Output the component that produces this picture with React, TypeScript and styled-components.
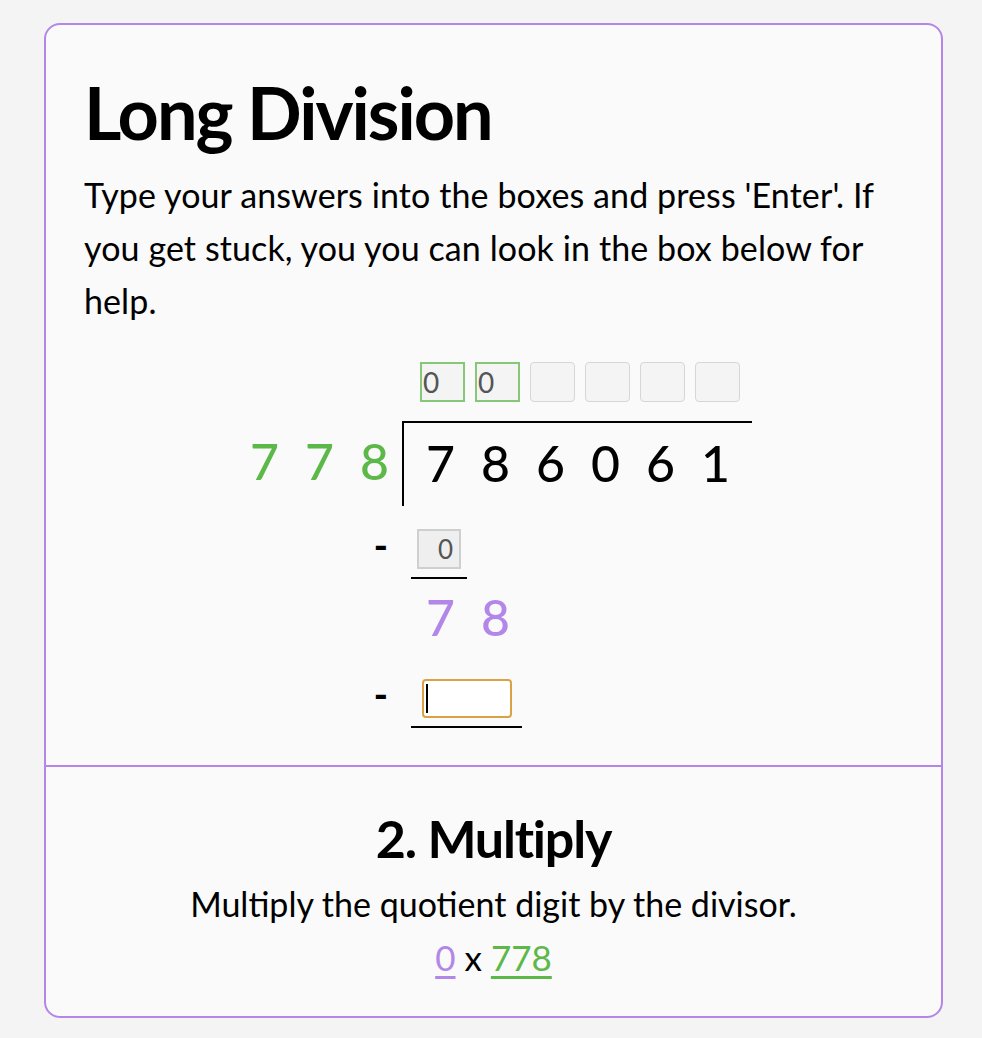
import React from "react";
import styled, { createGlobalStyle } from "styled-components";

const Global = createGlobalStyle`
  html, body { margin: 0; padding: 0; background: #f4f4f4; }
  body { font-family: "Lato", "Noto Sans", sans-serif; color: #000; }
`;

const PURPLE = "#b386e9";
const GREEN = "#5cb848";

const Page = styled.div`
  padding: 23px 0 20px 44px;
`;

const Card = styled.div`
  width: 895px;
  border: 2px solid ${PURPLE};
  border-radius: 16px;
  background: #fafafa;
  overflow: hidden;
`;

const Top = styled.section`
  padding: 47px 38px 37px 38px;
  border-bottom: 2px solid ${PURPLE};
`;

const Title = styled.h1`
  margin: 0;
  font-family: "Lato", sans-serif;
  font-weight: 700;
  font-size: 72px;
  line-height: 80px;
  letter-spacing: -2px;
`;

const Intro = styled.p`
  margin: 16px 0 0 0;
  font-size: 34px;
  line-height: 53px;
  letter-spacing: 0.1px;
`;

const Division = styled.div`
  display: flex;
  flex-direction: column;
  align-items: center;
  margin-top: 35px;
`;

const Row = styled.div`
  display: flex;
  width: 517px;
`;

const Left = styled.div<{ $minus?: boolean }>`
  width: 167px;
  display: flex;
  justify-content: flex-end;
  align-items: ${(p) => (p.$minus ? "flex-end" : "center")};
`;

const Right = styled.div<{ $bracket?: boolean; $shift?: number }>`
  width: 350px;
  box-sizing: border-box;
  display: flex;
  align-items: flex-start;
  padding-left: ${(p) => (p.$bracket ? 9 : 11) + (p.$shift ?? 0)}px;
  border-left: ${(p) => (p.$bracket ? "2px solid #000" : "none")};
  border-top: ${(p) => (p.$bracket ? "2px solid #000" : "none")};
`;

const QuotientBox = styled.div<{ $done?: boolean }>`
  width: 45px;
  height: 40px;
  margin: 0 5px;
  box-sizing: border-box;
  border: ${(p) => (p.$done ? "2px solid #86c878" : "1.5px solid #d6d6d6")};
  border-radius: ${(p) => (p.$done ? "0" : "4px")};
  background: #f4f4f4;
  color: #555;
  font-size: 28px;
  line-height: 36px;
  padding-left: 1px;
`;

const Digit = styled.span<{ $color?: string }>`
  width: 55px;
  text-align: center;
  font-size: 50px;
  line-height: 1;
  font-weight: 500;
  color: ${(p) => p.$color ?? "#000"};
`;

const QuotientRow = styled(Row)`
  height: 40px;
  margin-bottom: 19px;
`;

const MainRow = styled(Row)`
  height: 85px;
`;

const DigitCells = styled.div`
  display: flex;
  height: 85px;
  align-items: center;
  padding-bottom: 6px;
  box-sizing: border-box;
`;

const Minus = styled.span`
  font-size: 38px;
  font-weight: 900;
  line-height: 20px;
  padding-right: 14px;
  padding-bottom: 25px;
`;

const Work = styled.div<{ $cols: number }>`
  width: ${(p) => p.$cols * 55 + 1}px;
  display: flex;
  justify-content: center;
  padding-bottom: 8px;
  border-bottom: 2px solid #000;
`;

const SubRow = styled(Row)`
  height: 73px;
  align-items: flex-end;
  & > div:last-child { align-self: flex-end; }
`;

const GivenBox = styled.div`
  width: 44px;
  height: 40px;
  box-sizing: border-box;
  border: 2px solid #cfcfcf;
  background: #efefef;
  color: #555;
  text-align: right;
  padding-right: 6px;
  font-size: 26px;
  line-height: 36px;
`;

const AnswerField = styled.div`
  position: relative;
  &::after {
    content: "";
    position: absolute;
    left: 4px;
    top: 5px;
    width: 2px;
    height: 29px;
    background: #000;
  }
`;

const AnswerInput = styled.input`
  display: block;
  width: 90px;
  height: 39px;
  box-sizing: border-box;
  border: 2px solid #d9a244;
  border-radius: 4px;
  background: #fff;
  outline: none;
  font-size: 24px;
  padding: 0 4px;
  caret-color: transparent;
`;

const DiffRow = styled(Row)`
  height: 76px;
  padding-top: 13px;
  box-sizing: border-box;
`;

const Bottom = styled.section`
  padding: 41px 20px 39px;
  text-align: center;
`;

const StepTitle = styled.h2`
  margin: 0;
  font-size: 52px;
  font-weight: 700;
  line-height: 60px;
  letter-spacing: -1.2px;
`;

const StepText = styled.p`
  margin: 16px 0 0;
  font-size: 34px;
  line-height: 40px;
`;

const Formula = styled.div`
  margin-top: 13px;
  font-size: 35px;
  line-height: 40px;
`;

const Link = styled.a<{ $color: string }>`
  color: ${(p) => p.$color};
  text-decoration: underline;
  text-decoration-thickness: 3px;
  text-underline-offset: 5px;
`;

export default function App() {
  const quotient = ["0", "0", "", "", "", ""];
  const dividend = ["7", "8", "6", "0", "6", "1"];
  return (
    <Page>
      <Global />
      <Card>
        <Top>
          <Title>Long Division</Title>
          <Intro>
            Type your answers into the boxes and press 'Enter'. If you get
            stuck, you you can look in the box below for help.
          </Intro>
          <Division>
            <QuotientRow>
              <Left />
              <Right $shift={2}>
                {quotient.map((q, i) => (
                  <QuotientBox key={i} $done={q !== ""}>
                    {q}
                  </QuotientBox>
                ))}
              </Right>
            </QuotientRow>
            <MainRow>
              <Left>
                <DigitCells>
                  {["7", "7", "8"].map((d, i) => (
                    <Digit key={i} $color={GREEN}>
                      {d}
                    </Digit>
                  ))}
                </DigitCells>
              </Left>
              <Right $bracket>
                <DigitCells>
                  {dividend.map((d, i) => (
                    <Digit key={i}>{d}</Digit>
                  ))}
                </DigitCells>
              </Right>
            </MainRow>
            <SubRow>
              <Left $minus>
                <Minus>-</Minus>
              </Left>
              <Right $shift={-2}>
                <Work $cols={1}>
                  <GivenBox>0</GivenBox>
                </Work>
              </Right>
            </SubRow>
            <DiffRow>
              <Left />
              <Right>
                {["7", "8"].map((d, i) => (
                  <Digit key={i} $color={PURPLE}>
                    {d}
                  </Digit>
                ))}
              </Right>
            </DiffRow>
            <SubRow>
              <Left $minus>
                <Minus>-</Minus>
              </Left>
              <Right $shift={-2}>
                <Work $cols={2}>
                  <AnswerField>
                    <AnswerInput defaultValue="" aria-label="answer" />
                  </AnswerField>
                </Work>
              </Right>
            </SubRow>
          </Division>
        </Top>
        <Bottom>
          <StepTitle>2. Multiply</StepTitle>
          <StepText>Multiply the quotient digit by the divisor.</StepText>
          <Formula>
            <Link $color={PURPLE} href="#">0</Link> x{" "}
            <Link $color={GREEN} href="#">778</Link>
          </Formula>
        </Bottom>
      </Card>
    </Page>
  );
}
